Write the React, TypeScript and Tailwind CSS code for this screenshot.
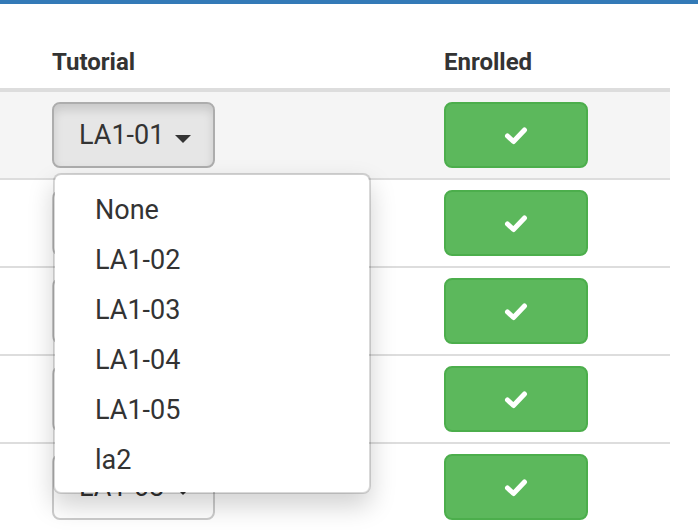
import React from "react";

const Check = () => (
  <svg width="24" height="19" viewBox="0 0 24 19" fill="none">
    <path d="M3.5 10 L9.5 15.5 L20.5 4" stroke="white" strokeWidth="5" strokeLinecap="round" strokeLinejoin="round" />
  </svg>
);

const rows = [
  { label: "LA1-01", active: true, hidden: false },
  { label: "", active: false, hidden: true },
  { label: "", active: false, hidden: true },
  { label: "", active: false, hidden: true },
  { label: "LA1-03", active: false, hidden: false },
];

const items = ["None", "LA1-02", "LA1-03", "LA1-04", "LA1-05", "la2"];

export default function App() {
  return (
    <div className="relative w-[698px] h-[530px] overflow-hidden bg-white text-[#333] font-['Roboto',sans-serif]">
      <div className="h-[4px] bg-[#337ab7]" />
      <div className="w-[670px]">
        <div className="flex pt-[44px] pb-[12px] pl-[52px] border-b-4 border-[#ddd] text-[24px] leading-[28px] font-bold">
          <div className="w-[392px]">Tutorial</div>
          <div>Enrolled</div>
        </div>
        {rows.map((r, i) => (
          <div
            key={i}
            className={`flex items-start h-[88px] pt-[10px] pl-[52px] border-b-2 border-[#ddd] ${i === 0 ? "bg-[#f5f5f5]" : "bg-white"}`}
          >
            <div className="w-[392px]">
              <div
                className={`flex items-center h-[66px] w-[163px] rounded-[8px] border-2 pl-[25px] text-[27px] ${
                  r.active
                    ? "bg-[#e6e6e6] border-[#adadad] shadow-[inset_0_6px_10px_rgba(0,0,0,0.125)]"
                    : "bg-white border-[#ccc]"
                }`}
              >
                {!r.hidden && (
                  <>
                    <span>{r.label}</span>
                    <span className="ml-[11px] mt-[8px] w-0 h-0 border-t-[8px] border-t-[#333] border-x-[8px] border-x-transparent" />
                  </>
                )}
              </div>
            </div>
            <div className="flex items-center justify-center h-[66px] w-[144px] rounded-[8px] border-2 border-[#4cae4c] bg-[#5cb85c]">
              <Check />
            </div>
          </div>
        ))}
      </div>
      <div className="absolute left-[53px] top-[173px] w-[318px] h-[321px] pt-[10px] pb-[7px] rounded-[8px] border-2 border-[rgba(0,0,0,0.15)] bg-white shadow-[0_12px_26px_rgba(0,0,0,0.18)] bg-clip-padding">
        {items.map((it) => (
          <div key={it} className="h-[50px] leading-[50px] pl-[40px] text-[27px] text-[#333]">
            {it}
          </div>
        ))}
      </div>
    </div>
  );
}
